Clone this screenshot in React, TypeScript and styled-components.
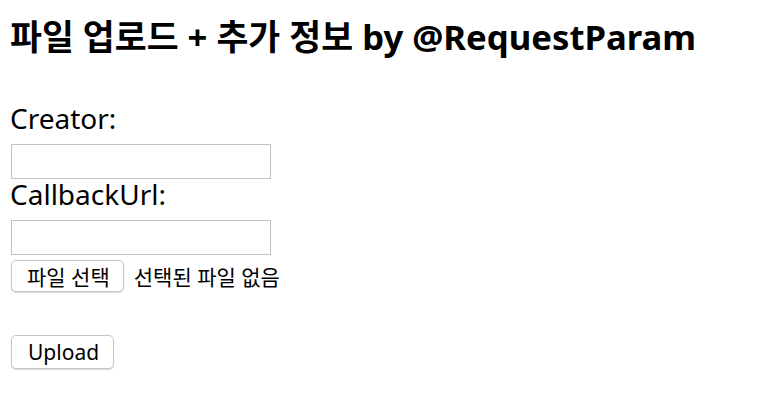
import React from "react";
import styled, { createGlobalStyle } from "styled-components";

const Global = createGlobalStyle`
  html, body { margin: 0; padding: 0; background: #fff; }
  body {
    padding: 10px;
    font-family: "Noto Sans", "Noto Sans CJK KR", sans-serif;
    color: #000;
  }
`;

const Title = styled.h2`
  margin: 6px 0 45px;
  font-size: 34.7px;
  font-weight: 700;
  line-height: 42px;
  white-space: nowrap;
`;

const Form = styled.form`
  display: flex;
  flex-direction: column;
  align-items: flex-start;
`;

const Label = styled.label`
  font-size: 28px;
  line-height: 30px;
`;

const TextInput = styled.input`
  box-sizing: border-box;
  width: 260px;
  height: 35px;
  margin: 11px 0 0 1px;
  border: 1px solid #c2c2c2;
  background: #fff;
  outline: none;
`;

const FileRow = styled.div`
  display: flex;
  align-items: center;
  gap: 10px;
  margin: 5px 0 43px 1px;
  font-size: 21px;
`;

const Button = styled.button<{ $wide?: boolean }>`
  box-sizing: border-box;
  height: ${(p) => (p.$wide ? "34px" : "32px")};
  padding: ${(p) => (p.$wide ? "0 14px 0 16px" : "0 13px 0 15px")};
  border: 1px solid #c6c6c6;
  border-radius: 5px;
  background: #fff;
  box-shadow: 0 1px 1px rgba(0, 0, 0, 0.15);
  font-family: inherit;
  font-size: 21px;
  color: #000;
`;

const UploadButton = styled(Button)`
  margin-left: 1px;
`;

const Hint = styled.span`
  color: #000;
`;

export default function App() {
  return (
    <>
      <Global />
      <Title>파일 업로드 + 추가 정보 by @RequestParam</Title>
      <Form onSubmit={(e) => e.preventDefault()}>
        <Label htmlFor="creator">Creator:</Label>
        <TextInput id="creator" type="text" />
        <Label htmlFor="callback">CallbackUrl:</Label>
        <TextInput id="callback" type="text" />
        <FileRow>
          <Button type="button">파일 선택</Button>
          <Hint>선택된 파일 없음</Hint>
        </FileRow>
        <UploadButton type="submit" $wide>
          Upload
        </UploadButton>
      </Form>
    </>
  );
}
